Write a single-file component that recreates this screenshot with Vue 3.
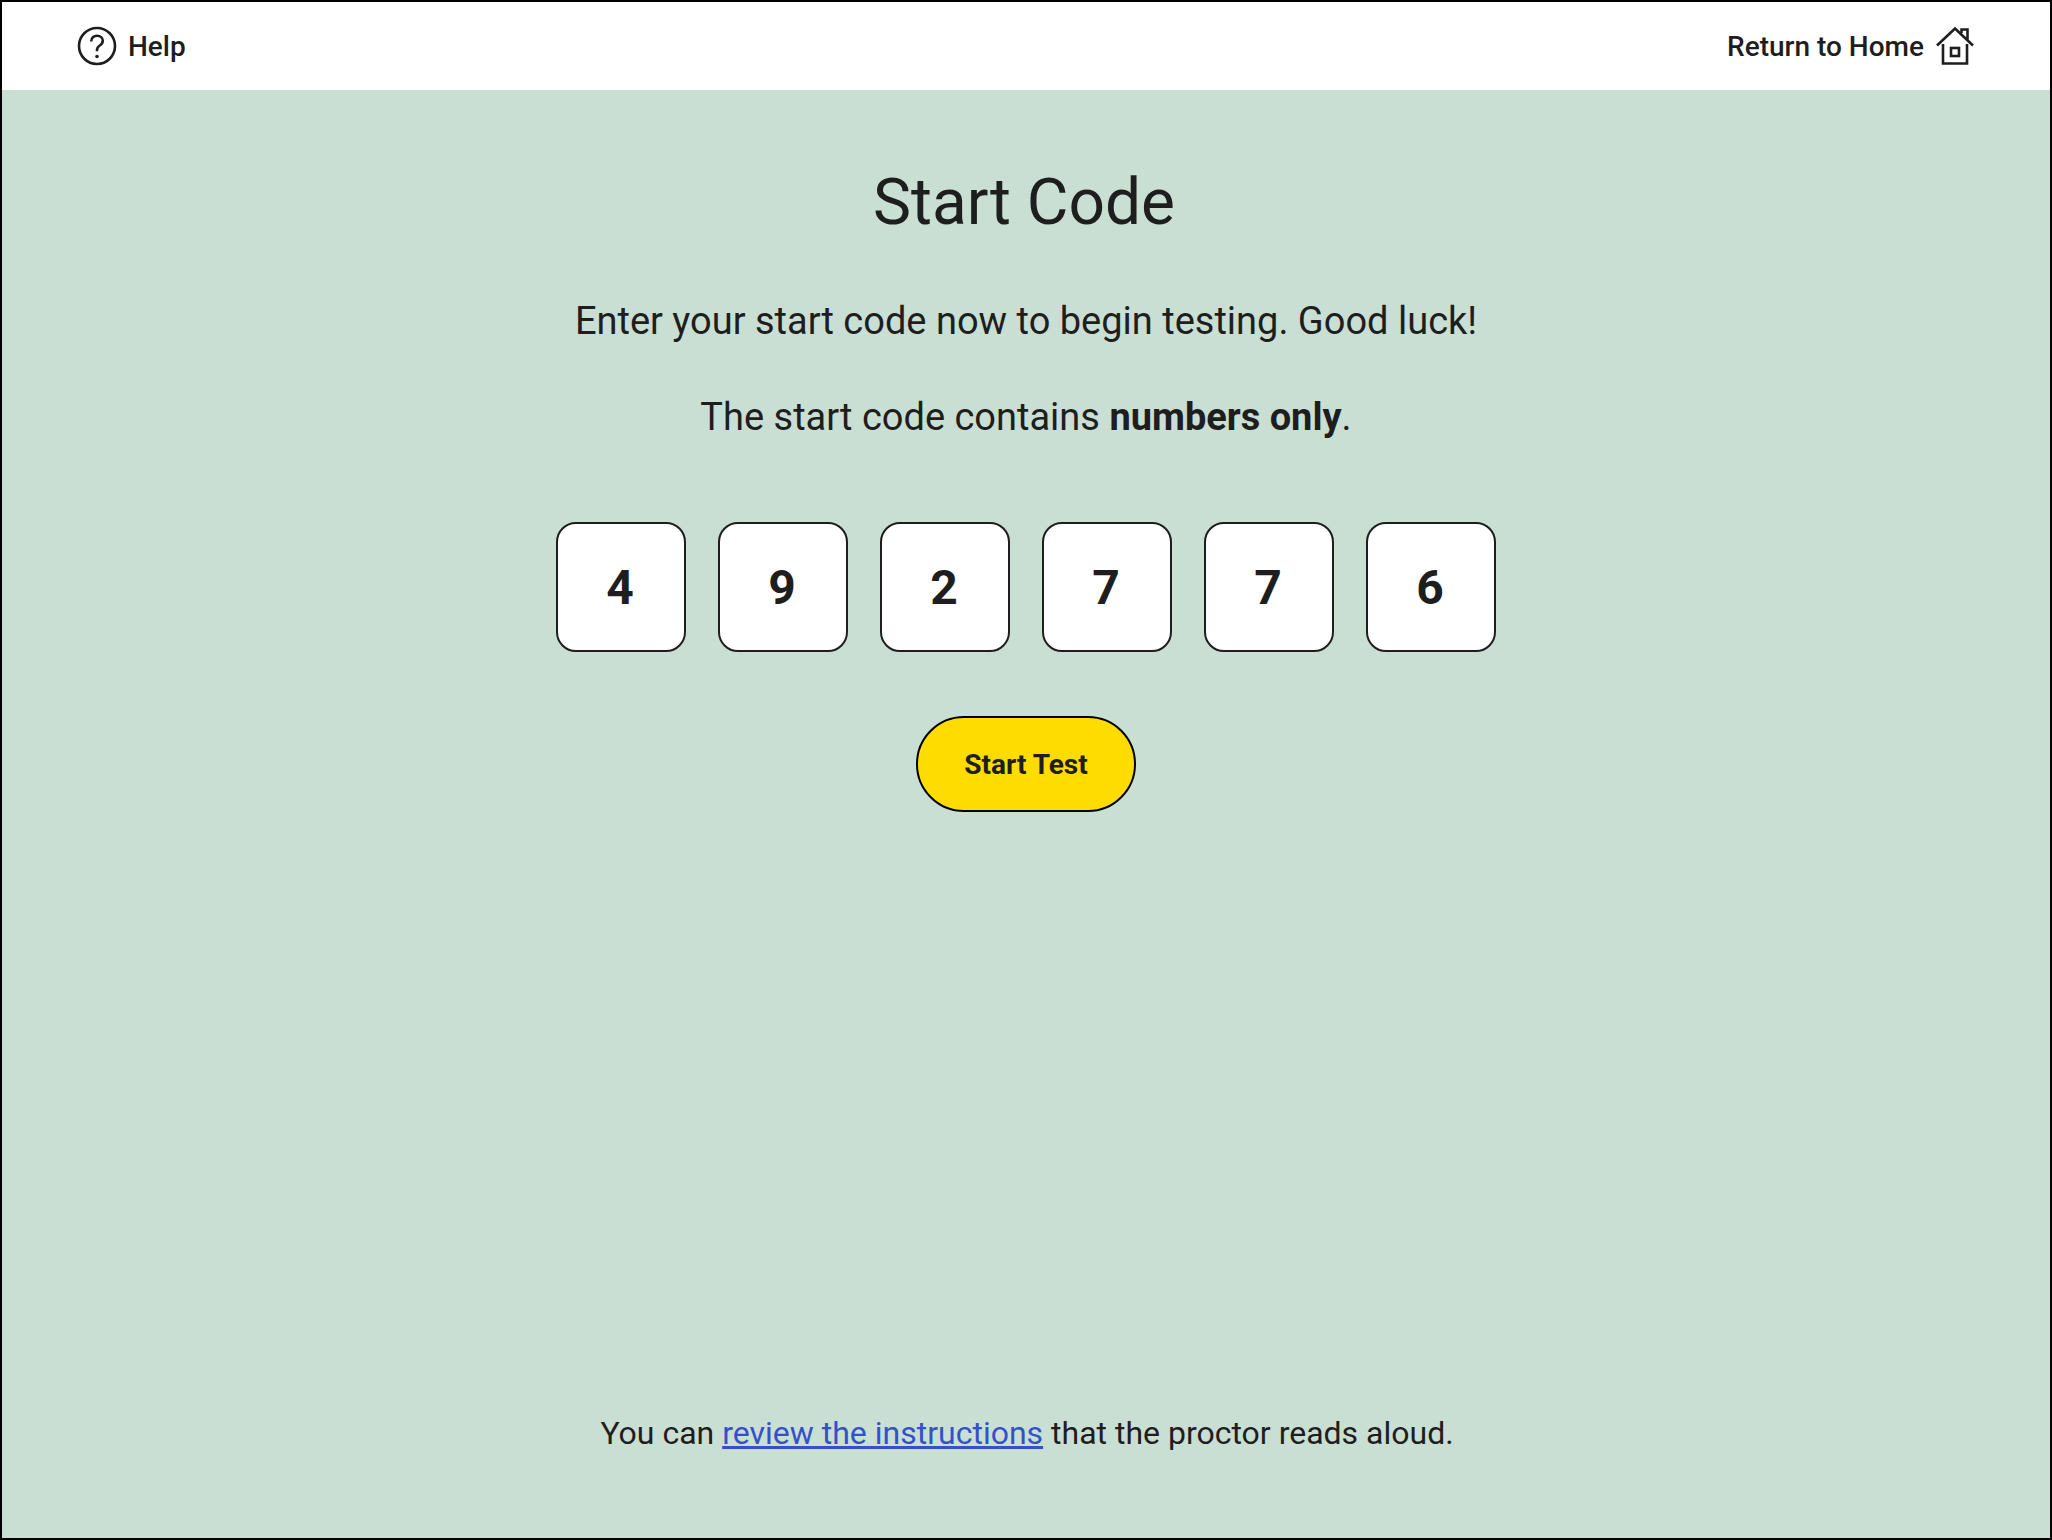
<template>
  <div class="frame">
    <header class="top-bar">
      <a class="top-link" href="#">
        <svg class="help-icon" width="40" height="40" viewBox="0 0 40 40" fill="none" stroke="currentColor" stroke-width="2.6">
          <circle cx="20" cy="20" r="18" />
          <path d="M14.2 15.4c0-3.400 2.600-5.600 5.900-5.600 3.200 0 5.700 2 5.700 5 0 2.300-1.200 3.500-3 4.700-1.800 1.200-2.800 2.300-2.800 4.500v1.200" />
          <circle cx="20" cy="30.500" r="1.800" fill="currentColor" stroke="none" />
        </svg>
        <span>Help</span>
      </a>
      <a class="top-link" href="#">
        <span>Return to Home</span>
        <svg class="home-icon" width="38" height="38" viewBox="0 0 38 38" fill="none" stroke="currentColor" stroke-width="2.600">
          <path d="M1 18.500 19 1.500l18 17" />
          <path d="M25.500 6V2.500h6v10" />
          <path d="M7 17v19.500h24V17" />
          <rect x="15" y="21" width="8" height="8" />
        </svg>
      </a>
    </header>

    <main class="content">
      <h1 class="title">Start Code</h1>
      <p class="intro">Enter your start code now to begin testing. Good luck!</p>
      <p class="intro second">The start code contains <strong>numbers only</strong>.</p>

      <div class="code-row">
        <div v-for="(digit, i) in digits" :key="i" class="code-box">{{ digit }}</div>
      </div>

      <button class="start-button" type="button">Start Test</button>

      <p class="note">You can <a href="#">review the instructions</a> that the proctor reads aloud.</p>
    </main>
  </div>
</template>

<script setup>
const digits = ['4', '9', '2', '7', '7', '6']
</script>

<style>
html,
body {
  margin: 0;
  background: #000;
}
</style>

<style scoped>
.frame {
  width: 2052px;
  height: 1540px;
  box-sizing: border-box;
  border: 2px solid #000;
  display: flex;
  flex-direction: column;
  font-family: Roboto, sans-serif;
  color: #1e1e1e;
  background: #c9dfd3;
}

.top-bar {
  height: 88px;
  flex-shrink: 0;
  background: #fff;
  display: flex;
  align-items: center;
  justify-content: space-between;
  padding: 0 76px 0 75px;
}

.top-link {
  display: flex;
  align-items: center;
  gap: 11px;
  font-size: 28px;
  font-weight: 500;
  color: inherit;
  text-decoration: none;
}

.top-link:last-child {
  gap: 12px;
}

.content {
  flex: 1;
  display: flex;
  flex-direction: column;
  align-items: center;
}

.title {
  margin: 73px 4px 0 0;
  font-size: 64px;
  line-height: 80px;
  font-weight: 400;
}

.intro {
  margin: 54px 0 0;
  font-size: 38px;
  line-height: 48px;
}

.intro.second {
  margin-top: 48px;
}

.intro strong {
  font-weight: 700;
}

.code-row {
  display: flex;
  gap: 32px;
  margin-top: 81px;
}

.code-box {
  width: 130px;
  height: 130px;
  box-sizing: border-box;
  border: 2px solid #1e1e1e;
  border-radius: 20px;
  padding-right: 2px;
  background: #fff;
  display: flex;
  align-items: center;
  justify-content: center;
  font-size: 48px;
  font-weight: 700;
}

.start-button {
  width: 220px;
  height: 96px;
  margin-top: 64px;
  box-sizing: border-box;
  border: 2px solid #000;
  border-radius: 48px;
  background: #ffdc00;
  color: #1e1e1e;
  font-family: inherit;
  font-size: 28px;
  font-weight: 700;
}

.note {
  margin: auto 0 85px 2px;
  font-size: 32px;
  line-height: 40px;
}

.note a {
  color: #3451cc;
  text-decoration: underline;
}
</style>
